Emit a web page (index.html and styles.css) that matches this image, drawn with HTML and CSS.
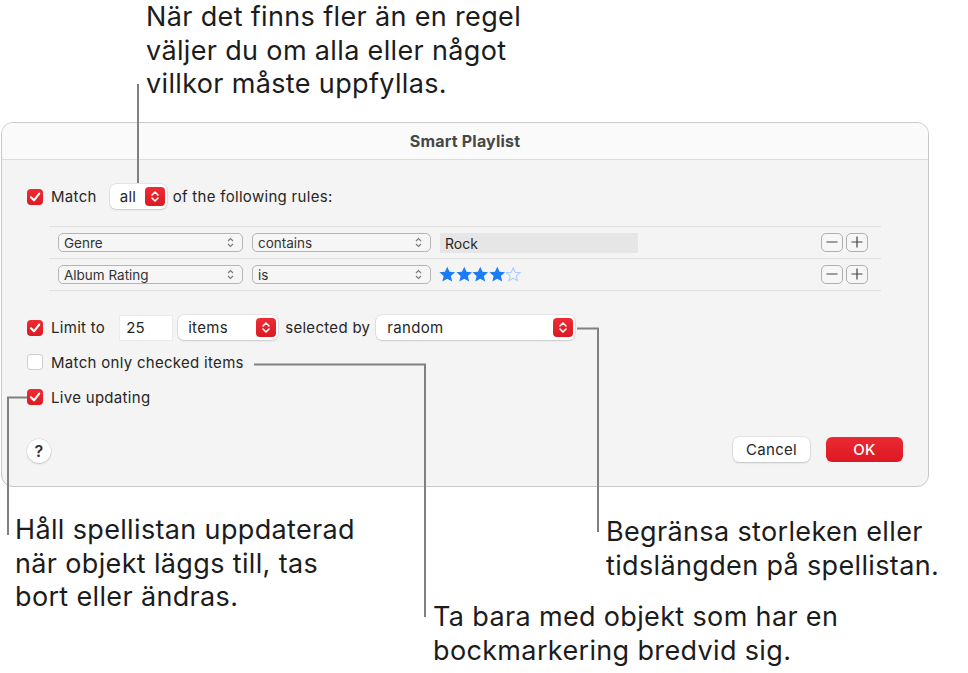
FILE: index.html
```html
<!DOCTYPE html>
<html>
<head>
    <title>Smart Playlist</title>
    <link rel="stylesheet" href="styles.css">
</head>
<body>
<div class="canvas">
    <div class="note note-top">När det finns fler än en regel<br>väljer du om alla eller något<br>villkor måste uppfyllas.</div>

    <div class="dialog">
        <div class="title-bar">Smart Playlist</div>
        <div class="dialog-body">
            <div class="row match-row">
                <span class="check on"><svg width="16" height="16" viewBox="0 0 16 16"><path d="M4 8.3 L7 11.3 L12.2 4.6" fill="none" stroke="#fff" stroke-width="2.2" stroke-linecap="round" stroke-linejoin="round"/></svg></span>
                <span class="label">Match</span>
                <span class="popup popup-all"><span>all</span><span class="stepper"><svg width="20" height="19" viewBox="0 0 20 19"><path d="M7 8 L10 5 L13 8 M7 11 L10 14 L13 11" fill="none" stroke="#fff" stroke-width="1.6" stroke-linecap="round" stroke-linejoin="round"/></svg></span></span>
                <span class="label label-rules">of the following rules:</span>
            </div>

            <div class="rules">
                <div class="rule">
                    <span class="select select-field"><span>Genre</span><svg class="chev" width="7" height="11" viewBox="0 0 7 11"><path d="M1 4 L3.5 1.5 L6 4 M1 7 L3.5 9.5 L6 7" fill="none" stroke="#7a7a7a" stroke-width="1.1"/></svg></span>
                    <span class="select select-op"><span>contains</span><svg class="chev" width="7" height="11" viewBox="0 0 7 11"><path d="M1 4 L3.5 1.5 L6 4 M1 7 L3.5 9.5 L6 7" fill="none" stroke="#7a7a7a" stroke-width="1.1"/></svg></span>
                    <span class="text-field">Rock</span>
                    <span class="pm"><svg width="22" height="18" viewBox="0 0 22 18"><path d="M5.5 9 H16.5" stroke="#444" stroke-width="1.2"/></svg></span>
                    <span class="pm"><svg width="22" height="18" viewBox="0 0 22 18"><path d="M5.5 9 H16.5 M11 3.5 V14.5" stroke="#444" stroke-width="1.2"/></svg></span>
                </div>
                <div class="rule">
                    <span class="select select-field"><span>Album Rating</span><svg class="chev" width="7" height="11" viewBox="0 0 7 11"><path d="M1 4 L3.5 1.5 L6 4 M1 7 L3.5 9.5 L6 7" fill="none" stroke="#7a7a7a" stroke-width="1.1"/></svg></span>
                    <span class="select select-op"><span>is</span><svg class="chev" width="7" height="11" viewBox="0 0 7 11"><path d="M1 4 L3.5 1.5 L6 4 M1 7 L3.5 9.5 L6 7" fill="none" stroke="#7a7a7a" stroke-width="1.1"/></svg></span>
                    <span class="stars">
                        <svg width="16.5" height="17" viewBox="0 0 16 16"><polygon points="8,0.4 10.2,5.4 15.6,5.8 11.5,9.4 12.8,14.8 8,12 3.2,14.8 4.5,9.4 0.4,5.8 5.8,5.4" fill="#1a7cf7"/></svg>
                        <svg width="16.5" height="17" viewBox="0 0 16 16"><polygon points="8,0.4 10.2,5.4 15.6,5.8 11.5,9.4 12.8,14.8 8,12 3.2,14.8 4.5,9.4 0.4,5.8 5.8,5.4" fill="#1a7cf7"/></svg>
                        <svg width="16.5" height="17" viewBox="0 0 16 16"><polygon points="8,0.4 10.2,5.4 15.6,5.8 11.5,9.4 12.8,14.8 8,12 3.2,14.8 4.5,9.4 0.4,5.8 5.8,5.4" fill="#1a7cf7"/></svg>
                        <svg width="16.5" height="17" viewBox="0 0 16 16"><polygon points="8,0.4 10.2,5.4 15.6,5.8 11.5,9.4 12.8,14.8 8,12 3.2,14.8 4.5,9.4 0.4,5.8 5.8,5.4" fill="#1a7cf7"/></svg>
                        <svg width="16.5" height="17" viewBox="0 0 16 16"><polygon points="8,1.4 9.9,5.8 14.6,6.2 11,9.3 12.1,14 8,11.5 3.9,14 5,9.3 1.4,6.2 6.1,5.8" fill="none" stroke="#a9cdfb" stroke-width="1"/></svg>
                    </span>
                    <span class="pm"><svg width="22" height="18" viewBox="0 0 22 18"><path d="M5.5 9 H16.5" stroke="#444" stroke-width="1.2"/></svg></span>
                    <span class="pm"><svg width="22" height="18" viewBox="0 0 22 18"><path d="M5.5 9 H16.5 M11 3.5 V14.5" stroke="#444" stroke-width="1.2"/></svg></span>
                </div>
            </div>

            <div class="row limit-row">
                <span class="check on"><svg width="16" height="16" viewBox="0 0 16 16"><path d="M4 8.3 L7 11.3 L12.2 4.6" fill="none" stroke="#fff" stroke-width="2.2" stroke-linecap="round" stroke-linejoin="round"/></svg></span>
                <span class="label">Limit to</span>
                <span class="num-field">25</span>
                <span class="popup popup-items"><span>items</span><span class="stepper"><svg width="20" height="19" viewBox="0 0 20 19"><path d="M7 8 L10 5 L13 8 M7 11 L10 14 L13 11" fill="none" stroke="#fff" stroke-width="1.6" stroke-linecap="round" stroke-linejoin="round"/></svg></span></span>
                <span class="label label-by">selected by</span>
                <span class="popup popup-random"><span>random</span><span class="stepper"><svg width="20" height="19" viewBox="0 0 20 19"><path d="M7 8 L10 5 L13 8 M7 11 L10 14 L13 11" fill="none" stroke="#fff" stroke-width="1.6" stroke-linecap="round" stroke-linejoin="round"/></svg></span></span>
            </div>

            <div class="row check-row checked-row">
                <span class="check"></span>
                <span class="label">Match only checked items</span>
            </div>

            <div class="row check-row live-row">
                <span class="check on"><svg width="16" height="16" viewBox="0 0 16 16"><path d="M4 8.3 L7 11.3 L12.2 4.6" fill="none" stroke="#fff" stroke-width="2.2" stroke-linecap="round" stroke-linejoin="round"/></svg></span>
                <span class="label">Live updating</span>
            </div>

            <div class="footer">
                <span class="help">?</span>
                <span class="btn btn-cancel">Cancel</span>
                <span class="btn btn-ok">OK</span>
            </div>
        </div>
    </div>

    <svg class="leaders" width="968" height="673" viewBox="0 0 968 673">
        <path d="M138 84 V183" />
        <path d="M27 397.5 H8 V535" />
        <path d="M254 364.5 H425 V617" />
        <path d="M577 328.5 H598 V532" />
    </svg>

    <div class="note note-live">Håll spellistan uppdaterad<br>när objekt läggs till, tas<br>bort eller ändras.</div>
    <div class="note note-limit">Begränsa storleken eller<br>tidslängden på spellistan.</div>
    <div class="note note-checked">Ta bara med objekt som har en<br>bockmarkering bredvid sig.</div>
</div>
</body>
</html>
```

FILE: styles.css
```css
* {
    box-sizing: border-box;
}
body {
    margin: 0;
    background: #fff;
    font-family: Inter, "Noto Sans", sans-serif;
    color: #262626;
}
.canvas {
    position: relative;
    width: 968px;
    height: 673px;
    overflow: hidden;
}

/* callout texts */
.note {
    position: absolute;
    font-size: 27px;
    line-height: 33.5px;
    letter-spacing: 0.35px;
    color: #1c1c1c;
    white-space: nowrap;
}
.note-top {
    left: 146px;
    top: 0;
}
.note-live {
    left: 15px;
    top: 513px;
}
.note-limit {
    left: 606px;
    top: 515px;
}
.note-checked {
    left: 433px;
    top: 600px;
}
.leaders {
    position: absolute;
    left: 0;
    top: 0;
    pointer-events: none;
}
.leaders path {
    fill: none;
    stroke: #808080;
    stroke-width: 2;
}

/* dialog */
.dialog {
    position: absolute;
    left: 1px;
    top: 122px;
    width: 928px;
    border: 1px solid #c8c8c8;
    border-radius: 12px;
    background: #f4f4f4;
    overflow: hidden;
}
.title-bar {
    height: 37px;
    border-bottom: 1px solid #dcdcdc;
    background: #fafafa;
    text-align: center;
    font-weight: 700;
    font-size: 16px;
    letter-spacing: 0.2px;
    line-height: 36px;
    color: #474747;
}
.dialog-body {
    padding: 24px 25px 24px 25px;
    font-size: 15px;
    letter-spacing: 0.3px;
}
.row {
    display: flex;
    align-items: center;
}
.match-row,
.limit-row {
    height: 25px;
}
.check {
    width: 16px;
    height: 16px;
    border-radius: 4px;
    background: #fff;
    box-shadow: inset 0 0 0 1px #cfcfcf;
    flex: none;
}
.check.on {
    background: linear-gradient(#ee2b33, #dc1a24);
    box-shadow: none;
}
.check svg {
    display: block;
}
.label {
    margin-left: 8px;
    white-space: nowrap;
}
.popup {
    display: flex;
    align-items: center;
    justify-content: space-between;
    height: 25px;
    background: #fff;
    border-radius: 6px;
    box-shadow: 0 0 0 0.5px rgba(0, 0, 0, 0.12), 0 1px 2px rgba(0, 0, 0, 0.12);
    padding: 0 2px 0 10px;
}
.popup-all {
    width: 57px;
    margin-left: 13px;
}
.label-rules {
    margin-left: 6px;
}
.stepper {
    width: 20px;
    height: 19px;
    border-radius: 4px;
    background: linear-gradient(#ef2c34, #da1923);
}
.stepper svg {
    display: block;
}

/* rule table */
.rules {
    margin: 17px 22px 0 22px;
    border-top: 1px solid #dedede;
    letter-spacing: 0;
}
.rule {
    display: flex;
    align-items: center;
    height: 32px;
    border-bottom: 1px solid #dedede;
    padding: 0 13px 0 9px;
}
.select {
    display: flex;
    align-items: center;
    justify-content: space-between;
    height: 19px;
    border: 1px solid #b4b4b4;
    border-radius: 5px;
    background: #f6f6f6;
    font-size: 13.5px;
    padding: 0 8px 0 5px;
    color: #333;
}
.select-field {
    width: 185px;
}
.select-op {
    width: 179px;
    margin-left: 9px;
}
.chev {
    display: block;
}
.text-field {
    width: 198px;
    height: 20px;
    margin-left: 9px;
    background: #e6e6e6;
    font-size: 14px;
    line-height: 21px;
    padding-left: 5px;
    color: #262626;
}
.stars {
    display: flex;
    margin-left: 8px;
}
.stars svg {
    display: block;
}
.pm {
    width: 22px;
    height: 19px;
    border: 1px solid #b0b0b0;
    border-radius: 5px;
    background: #f6f6f6;
    margin-left: 3px;
}
.pm svg {
    display: block;
    margin: -1px 0 0 -1px;
}
.rule .pm:nth-last-child(2) {
    margin-left: auto;
}

/* options */
.limit-row {
    margin-top: 24px;
}
.num-field {
    width: 52px;
    height: 24px;
    margin-left: 15px;
    background: #fff;
    line-height: 24px;
    padding-left: 6px;
    box-shadow: 0 0 0 0.5px rgba(0, 0, 0, 0.08);
}
.popup-items {
    width: 100px;
    margin-left: 6px;
}
.label-by {
    margin-left: 7px;
}
.popup-random {
    width: 199px;
    margin-left: 6px;
    padding-left: 11px;
}
.check-row {
    height: 20px;
}
.checked-row {
    margin-top: 12px;
}
.live-row {
    margin-top: 15px;
}

/* footer */
.footer {
    display: flex;
    align-items: center;
    height: 25px;
    margin-top: 30px;
}
.help {
    width: 24px;
    height: 24px;
    border-radius: 50%;
    background: #fff;
    box-shadow: 0 0 0 0.5px rgba(0, 0, 0, 0.12), 0 1px 2px rgba(0, 0, 0, 0.15);
    text-align: center;
    line-height: 24px;
    font-size: 16px;
    font-weight: 600;
    color: #333;
    margin-top: 3px;
}
.btn {
    width: 77px;
    height: 25px;
    border-radius: 6px;
    text-align: center;
    line-height: 25px;
    font-size: 15px;
}
.btn-cancel {
    margin-left: auto;
    background: #fff;
    box-shadow: 0 0 0 0.5px rgba(0, 0, 0, 0.12), 0 1px 2px rgba(0, 0, 0, 0.15);
}
.btn-ok {
    margin-left: 16px;
    background: linear-gradient(#ec2a32, #dc1822);
    color: #fff;
    font-weight: 500;
}
```
